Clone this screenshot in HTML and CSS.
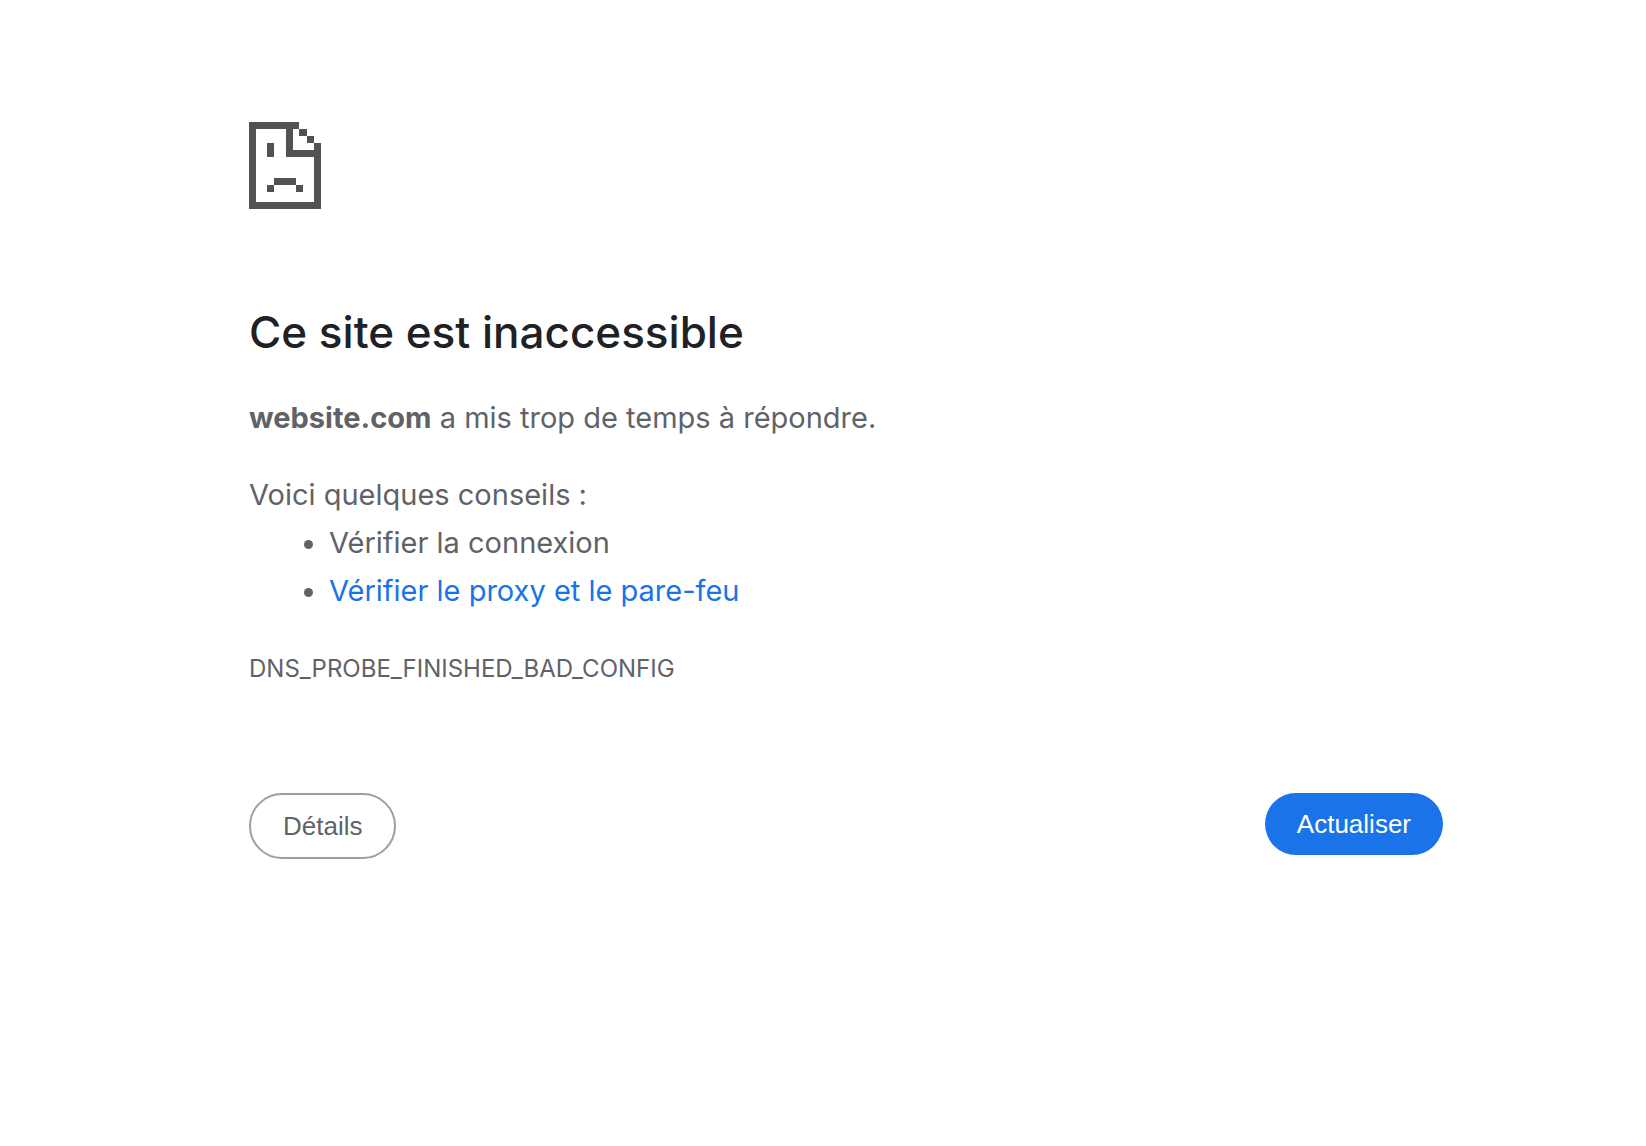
FILE: index.html
```html
<!DOCTYPE html>
<html lang="fr">
<head>
    <meta charset="UTF-8">
    <meta name="viewport" content="width=device-width, initial-scale=1.0">
    <title>website.com</title>
    <link rel="stylesheet" href="styles.css">
</head>
<body>
    <main class="error-page">
        <svg class="error-icon" viewBox="0 0 216 261" shape-rendering="crispEdges" aria-hidden="true">
            <path d="M0 0H151V21H173V42H194V63H216V261H0ZM21 21V240H194V105H110V21ZM131 21V84H194V63H173V42H151V21Z" fill-rule="evenodd"/>
            <path d="M54 63h21v42h-21zM75 168h65v21h-65zM54 189h21v21h-21zM140 189h21v21h-21z"/>
        </svg>

        <h1>Ce site est inaccessible</h1>
        <p class="summary"><strong>website.com</strong> a mis trop de temps à répondre.</p>

        <div class="suggestions">
            <p>Voici quelques conseils :</p>
            <ul>
                <li>Vérifier la connexion</li>
                <li><a href="#">Vérifier le proxy et le pare-feu</a></li>
            </ul>
        </div>

        <p class="error-code">DNS_PROBE_FINISHED_BAD_CONFIG</p>

        <div class="buttons">
            <button type="button" class="details-button">Détails</button>
            <button type="button" class="reload-button">Actualiser</button>
        </div>
    </main>
</body>
</html>
```
FILE: styles.css
```css
body {
    margin: 0;
    background-color: #fff;
    color: #5f6368;
    font-family: Inter, sans-serif;
    font-size: 29px;
    line-height: 48px;
}

.error-page {
    padding: 122px 203px 80px 249px;
}

.error-icon {
    display: block;
    width: 72px;
    height: 87px;
    fill: #525252;
}

h1 {
    margin: 93px 0 32px;
    color: #202124;
    font-size: 44px;
    font-weight: 500;
    line-height: 60px;
}

p {
    margin: 0;
}

.suggestions {
    margin: 29px 0 30px;
}

ul {
    margin: 0;
    padding-left: 80px;
}

a {
    color: #1a73e8;
    text-decoration: none;
}

.error-code {
    font-size: 24px;
}

.buttons {
    display: flex;
    justify-content: space-between;
    align-items: flex-start;
    margin-top: 100px;
}

button {
    padding: 16px 32px;
    border: none;
    border-radius: 40px;
    font-family: "Liberation Sans", Arial, sans-serif;
    font-size: 26px;
    line-height: 30px;
    cursor: pointer;
}

.details-button {
    border: 2px solid #9e9e9e;
    background-color: #fff;
    color: #5f6368;
}

.reload-button {
    background-color: #1a73e8;
    color: #fff;
}
```
